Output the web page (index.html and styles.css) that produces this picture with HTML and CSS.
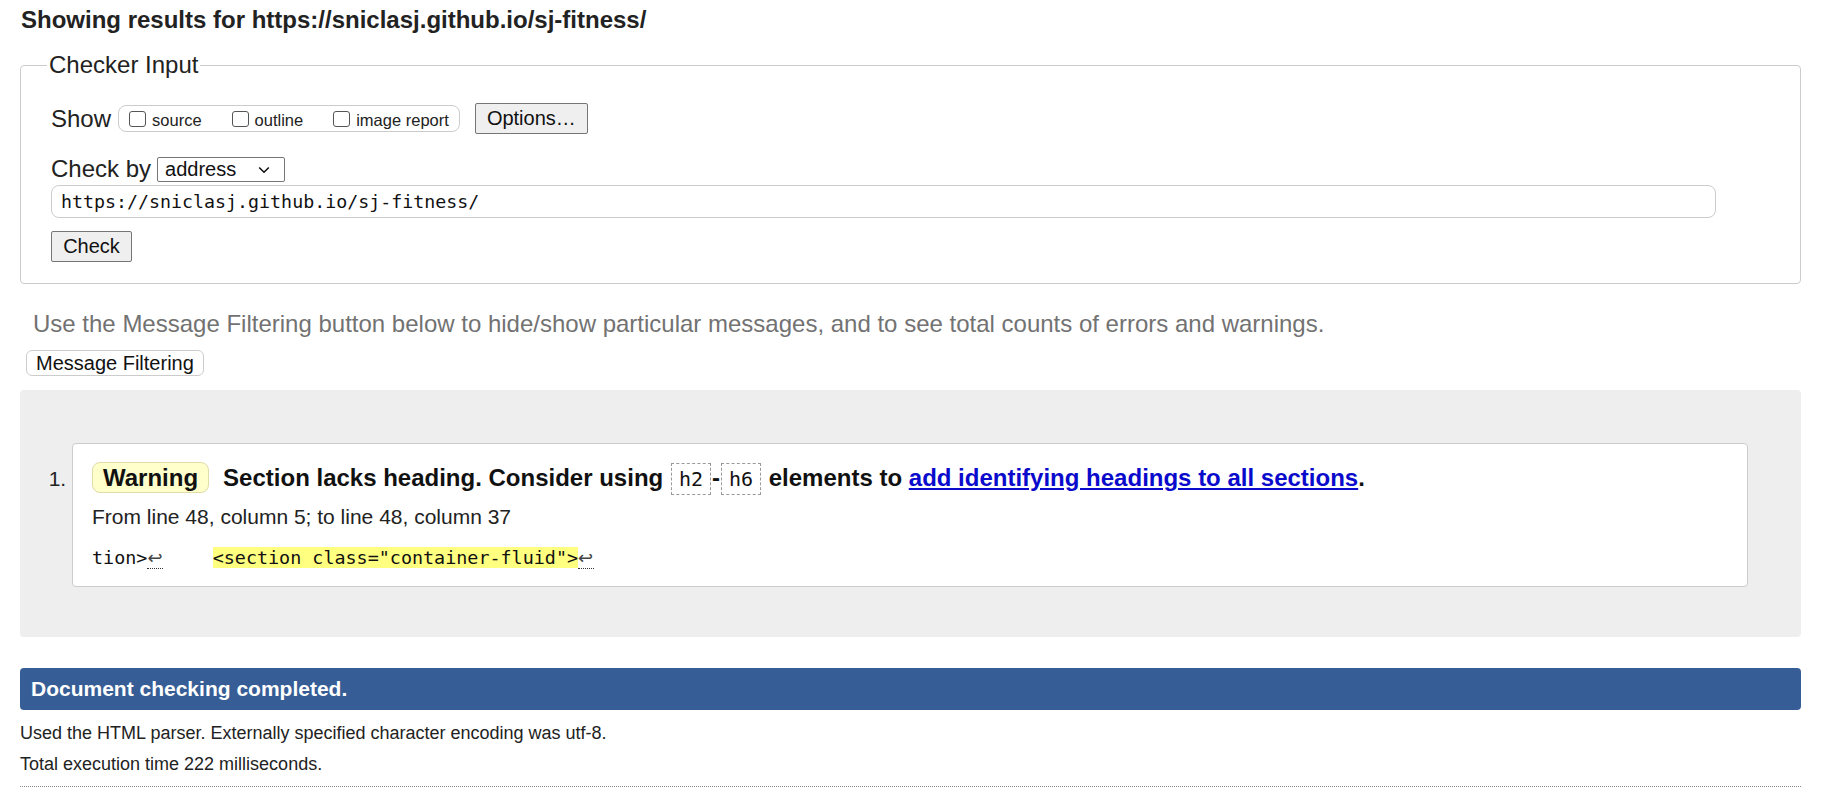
FILE: index.html
```html
<!DOCTYPE html>
<html lang="en">
<head>
<meta charset="utf-8">
<title>Nu Html Checker</title>
<link rel="stylesheet" href="styles.css">
</head>
<body>
<h2 class="page-title">Showing results for https://sniclasj.github.io/sj-fitness/</h2>
<form class="checker-form">
  <fieldset class="checker">
    <legend>Checker Input</legend>
    <div class="show-row">
      <span class="field-label">Show</span>
      <span class="opts">
        <label class="opt"><input type="checkbox" class="cb"><span>source</span></label>
        <label class="opt"><input type="checkbox" class="cb"><span>outline</span></label>
        <label class="opt"><input type="checkbox" class="cb"><span>image report</span></label>
      </span>
      <button type="button" class="btn options-btn">Options…</button>
    </div>
    <div class="by-row">
      <span class="field-label">Check by</span>
      <span class="select-wrap">
        <select class="select"><option>address</option></select>
        <svg class="chev" width="12" height="8" viewBox="0 0 12 8"><path d="M1.2 1.5 L6 6.2 L10.8 1.5" fill="none" stroke="#111" stroke-width="1.6"/></svg>
      </span>
    </div>
    <input class="url" type="text" value="https://sniclasj.github.io/sj-fitness/">
    <button type="button" class="btn check-btn">Check</button>
  </fieldset>
</form>
<p class="hint">Use the Message Filtering button below to hide/show particular messages, and to see total counts of errors and warnings.</p>
<button type="button" class="filter-btn">Message Filtering</button>
<div class="results">
  <ol class="messages">
    <li class="message">
      <p class="msg"><span class="badge">Warning</span><span class="msg-text">Section lacks heading. Consider using <code class="tag">h2</code>-<code class="tag">h6</code> elements to <a href="#" class="doc-link">add identifying headings to all sections</a>.</span></p>
      <p class="loc">From line 48, column 5; to line 48, column 37</p>
      <p class="extract"><code>tion&gt;<span class="lf">↩</span>    <b class="hl">&lt;section class="container-fluid"&gt;</b><span class="lf">↩</span></code></p>
    </li>
  </ol>
</div>
<p class="status">Document checking completed.</p>
<p class="meta first">Used the HTML parser. Externally specified character encoding was utf-8.</p>
<p class="meta">Total execution time 222 milliseconds.</p>
<div class="rule"></div>
</body>
</html>
```
FILE: styles.css
```css
* { box-sizing: border-box; }
html, body { margin: 0; background: #fff; }
body {
  padding: 6px 26px 0 20px;
  font-family: "Liberation Sans", Arial, sans-serif;
  font-size: 20px;
  color: #222;
}
.page-title {
  margin: 0 0 0 1px;
  font-size: 24px;
  line-height: 28px;
  font-weight: bold;
}
.checker-form { margin: 0; }
.checker {
  margin: 17px 0 0;
  padding: 24px 84px 21px 30px;
  border: 1px solid #ccc;
  border-radius: 4px;
  min-width: 0;
}
.checker legend {
  margin-left: -4px;
  padding: 0 2px;
  font-size: 24px;
  line-height: 28px;
}
.field-label { font-size: 24px; line-height: 28px; }
.show-row {
  display: flex;
  align-items: center;
  height: 31px;
}
.opts {
  display: flex;
  align-items: center;
  gap: 30px;
  height: 27px;
  margin-left: 7px;
  padding: 0 10px 0 10px;
  border: 1px solid #ccc;
  border-radius: 8px;
}
.opt {
  display: flex;
  align-items: center;
  gap: 6px;
  font-size: 16.5px;
}
.opt span { position: relative; top: 2px; }
.cb {
  appearance: none;
  -webkit-appearance: none;
  width: 17px;
  height: 16px;
  margin: 0;
  border: 1px solid #555;
  border-radius: 3px;
  background: #fff;
}
.btn {
  height: 31px;
  padding: 0 9px;
  border: 1px solid #767676;
  border-radius: 2px;
  background: #efefef;
  font-family: "Liberation Sans", Arial, sans-serif;
  font-size: 20px;
  color: #111;
}
.options-btn { margin-left: 15px; width: 113px; }
.by-row {
  display: flex;
  align-items: center;
  height: 28px;
  margin-top: 21px;
}
.select-wrap {
  position: relative;
  display: inline-block;
  margin-left: 6px;
  height: 25px;
}
.select {
  appearance: none;
  -webkit-appearance: none;
  width: 128px;
  height: 25px;
  margin: 0;
  padding: 0 0 0 7px;
  border: 1px solid #767676;
  border-radius: 2px;
  background: #fff;
  font-family: "Liberation Sans", Arial, sans-serif;
  font-size: 20px;
  color: #111;
}
.chev {
  position: absolute;
  right: 15px;
  top: 9px;
  pointer-events: none;
}
.url {
  display: block;
  width: 100%;
  height: 33px;
  margin-top: 2px;
  padding: 0 9px;
  border: 1px solid #ccc;
  border-radius: 8px;
  font-family: "DejaVu Sans Mono", monospace;
  font-size: 18.3px;
  color: #111;
}
.check-btn { display: block; margin-top: 13px; width: 81px; }
.hint {
  margin: 27px 0 0 13px;
  font-size: 24px;
  line-height: 26px;
  color: #727272;
}
.filter-btn {
  display: block;
  margin: 13px 0 0 6px;
  height: 26px;
  padding: 0 9px;
  border: 1px solid #ccc;
  border-radius: 6px;
  background: #fff;
  font-family: "Liberation Sans", Arial, sans-serif;
  font-size: 20px;
  color: #111;
}
.results {
  margin-top: 14px;
  padding: 53px 53px 50px 0;
  background: #eee;
  border-radius: 4px;
}
.messages {
  margin: 0;
  padding-left: 52px;
}
.message {
  padding: 17px 19px 16px;
  background: #fff;
  border: 1px solid #ccc;
  border-radius: 4px;
  font-size: 21px;
}
.message::marker { color: #222; }
.msg {
  margin: 0;
  font-size: 24px;
  line-height: 33px;
  font-weight: bold;
  color: #111;
}
.badge {
  display: inline-block;
  margin-right: 14px;
  padding: 0 10px;
  line-height: 29px;
  background: #ffffcc;
  border: 1px solid #dfdca8;
  border-radius: 8px;
}
.tag {
  display: inline-block;
  margin: 0 1px;
  padding: 0 7px;
  line-height: 30px;
  border: 1px dashed #999;
  font-family: "DejaVu Sans Mono", monospace;
  font-size: 20px;
  font-weight: normal;
}
.doc-link { color: #0a0acc; text-decoration: underline; }
.loc {
  margin: 10px 0 0;
  line-height: 24px;
}
.extract {
  margin: 16px 0 0;
  line-height: 24px;
  white-space: pre;
}
.extract code {
  font-family: "DejaVu Sans Mono", monospace;
  font-size: 18.4px;
  color: #111;
}
.lf {
  display: inline-block;
  width: 16px;
  margin-right: 5px;
  font-family: "DejaVu Sans", sans-serif;
  font-size: 18px;
  line-height: 20px;
  color: #444;
  border-bottom: 1px dotted #333;
}
.hl { font-weight: normal; background: #ffff80; }
.hl + .lf { margin-right: 0; }
.status {
  margin: 31px 0 0;
  height: 42px;
  padding-left: 11px;
  line-height: 42px;
  background: #365d95;
  color: #fff;
  font-size: 21px;
  font-weight: bold;
  border-radius: 4px;
}
.meta {
  margin: 0;
  font-size: 18px;
  line-height: 31px;
  color: #222;
}
.meta.first { margin-top: 8px; }
.rule {
  margin-top: 6px;
  border-top: 1px dotted #888;
}
```
